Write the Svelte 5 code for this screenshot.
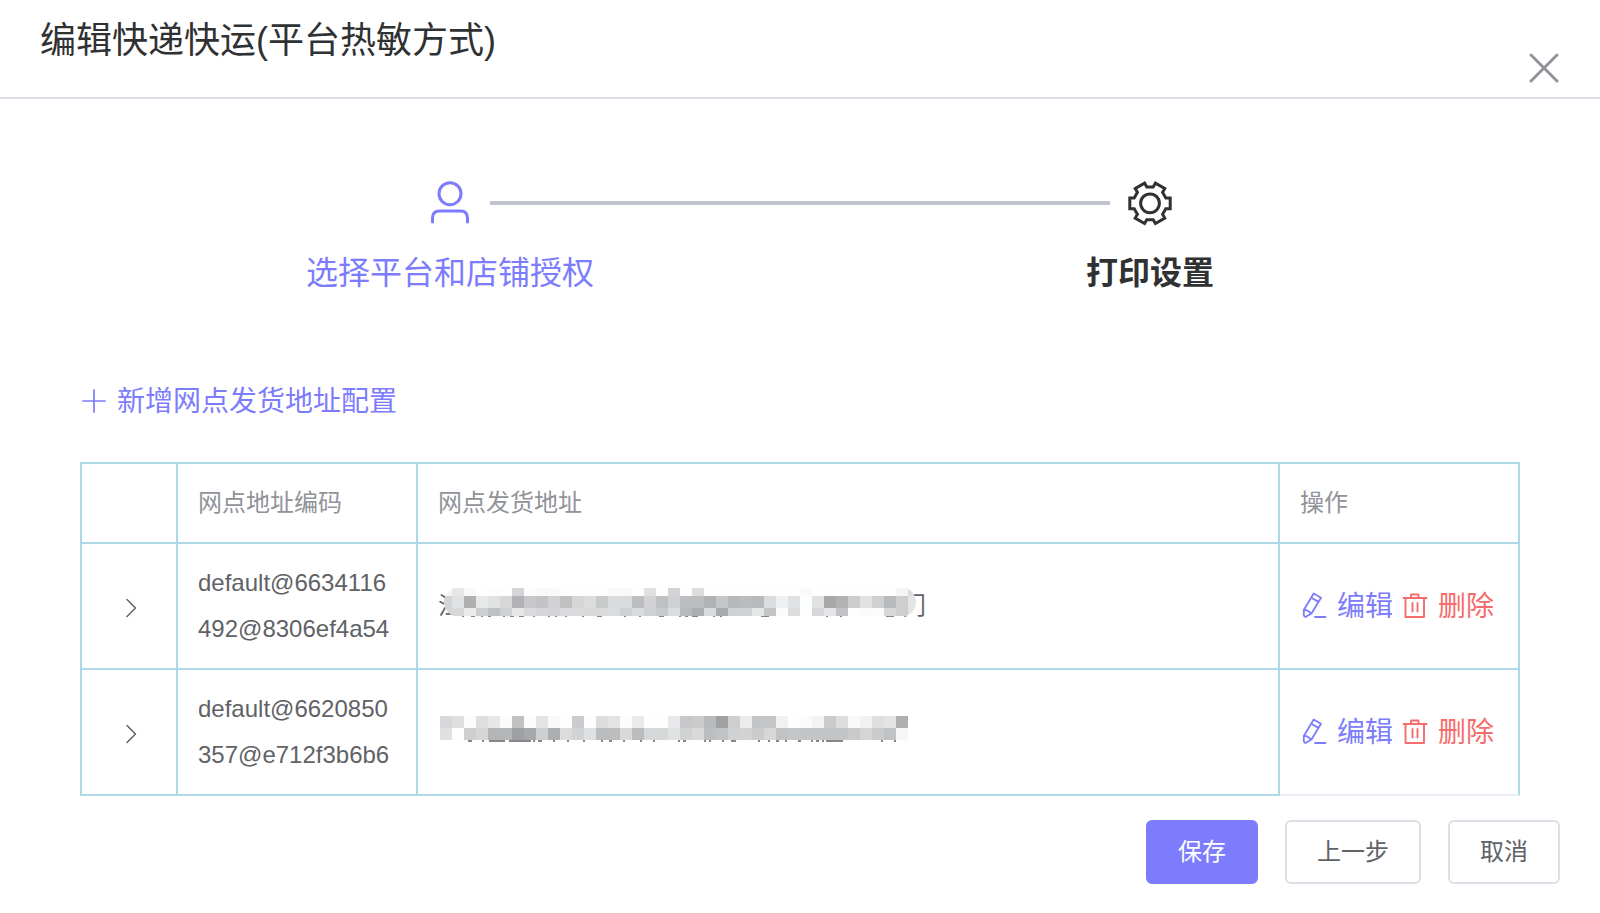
<script>
  const rows = [
    { code: 'default@6634116492@8306ef4a54', mask: 'first' },
    { code: 'default@6620850357@e712f3b6b6', mask: 'second' }
  ];

  // Censored address strips: 12px mosaic cells, one hex colour per cell
  const strips = {
    first: [
      { y: 4, h: 8, cells: 'f5f5f5 e6e6e7 f8f8f8 fefefe fcfcfc fefefe d3d5d8 fdfdfd f9f9f9 fafafa fefefe fefefe fefefe fefefe f9f9f9 f9f9f9 fefefe dfe1e1 fefefe d2d3d6 fefefe dcdede fefefe fefefe fefefe fefefe fefefe fefefe fefefe fefefe fafafa fefefe fefefe fefefe fefefe fefefe fefefe fefefe f4f4f4 dcdddd' },
      { y: 12, h: 12, cells: 'd3d4d7 e0e1e2 b0b0b1 e7e9e9 e0e3e2 d8d8d9 b2b2b4 c8c8ca c3c3c5 d1d2d4 bfc0c2 d6d6d7 dadddc c8c9cb dadbdd d9dadc bdbec0 d3d3d5 bfc0c2 d0d1d3 bcbdbf bdbec0 b1b2b4 c5c6c9 b7b8ba bbbcbe b8b9bb dbdcdf eff1f1 e0e1e4 fcfefd e0e2e1 a8a8a9 b1b2b4 cccdcf e2e2e3 cfd0d2 b9babc cececf e4e4e5' },
      { y: 24, h: 8, cells: 'd5d5d6 d8d8da ebebec cdced0 bfc0c2 cfd0d2 e6e8e8 dad9db d5d6d7 d4d4d6 d9dadc dadadc d9d9d9 dadadb dbdcde cfd0d3 dadbde d0d1d3 c8c9cb dbdcdd b8b9bb acadae dadbdc a9aaac d0d1d3 d1d2d4 e6e8e7 c4c5c7 fbfbfb dddddd fefefe d6d7da e6e6e8 c2c3c5 fefefe fbfbfb fcfcfc d7d7d8 cececf e4e4e5' }
    ],
    second: [
      { y: 6, h: 12, cells: 'd7d8db dfdfdf fcfcfc dddfde e7e7e7 fbfbfb c0c1c3 fcfcfc e4e4e5 f9f9f9 fefefe cbcccf fdfdfd dcdedd e2e4e3 fcfcfc eaeaea fefefe fefefe e9e9e9 c6c7ca cccbcc b9babc a0a1a3 cecece ececec c4c5c7 c5c6c8 f1f1f1 fefefe fbfbfb f3f3f3 cbcbcc dddddd f9f9f9 f1f1f1 dfdfdf e4e4e4 afb0b2' },
      { y: 18, h: 12, cells: 'e0e0e0 fefefe cecfd1 d6d6d6 b4b5b6 b5b6b7 9fa0a3 a7a8aa cecfd1 adaeb0 dcdcdc d2d3d5 dfe0e3 bbbcbe bcbdbf d9d9d9 bbbcbe d7d8da d6d7d9 e0e2e1 d1d2d4 d9d9d9 bdbec0 c1c2c4 d0d1d3 d3d3d4 cacbcd d7d7d7 c1c2c4 c5c6c8 c3c4c6 c4c5c7 c3c4c6 c4c5c7 c9cacc d5d5d5 cacbcd c1c2c4 f6f6f6' }
    ]
  };

  // Stroke ends that show just below each strip: [x, width]
  const ends = {
    first: [[24, 2], [33, 4], [43, 2], [50, 3], [65, 2], [72, 4], [81, 5], [95, 2], [110, 2], [117, 2], [127, 2], [144, 2], [159, 5], [186, 2], [201, 2], [221, 5], [241, 2], [247, 3], [254, 6], [275, 2], [282, 2], [323, 8], [388, 2], [402, 2], [448, 8]],
    second: [[30, 4], [44, 2], [51, 16], [71, 22], [81, 2], [95, 2], [100, 4], [115, 2], [129, 2], [145, 2], [163, 2], [171, 3], [185, 2], [202, 2], [215, 2], [240, 2], [245, 3], [266, 2], [271, 2], [284, 2], [293, 5], [320, 2], [330, 2], [338, 3], [347, 2], [360, 3], [373, 2], [378, 3], [384, 2], [388, 15], [403, 2], [443, 2], [456, 2]]
  };

  // Gear outline: six square teeth, 60 degrees apart, around (24, 24)
  const gear = Array.from({ length: 6 }, (_, k) => (k * Math.PI) / 3)
    .flatMap((a) =>
      [[15.8, -5.4], [20.2, -5.4], [20.2, 5.4], [15.8, 5.4]].map(([x, y]) =>
        [24 + x * Math.cos(a) - y * Math.sin(a), 24.3 + x * Math.sin(a) + y * Math.cos(a)]
          .map((n) => n.toFixed(2))
          .join(',')
      )
    )
    .join(' ');
</script>

<div class="dialog">
  <header>
    <h1>编辑快递快运(平台热敏方式)</h1>
    <button class="close" aria-label="关闭">
      <svg width="32" height="32" viewBox="0 0 32 32"><path d="M3 3 29 29M29 3 3 29" stroke="#909399" stroke-width="3" stroke-linecap="round" /></svg>
    </button>
  </header>

  <main>
    <ol class="steps">
      <li>
        <div class="head">
          <svg width="48" height="48" viewBox="0 0 48 48" fill="none" stroke="currentColor" stroke-width="3" stroke-linecap="round">
            <circle cx="24" cy="14.700" r="11" />
            <path d="M6.500 43V39Q6.500 32 13.500 32H34.500Q41.500 32 41.500 39V43" />
          </svg>
        </div>
        <span>选择平台和店铺授权</span>
      </li>
      <li class="current">
        <div class="head">
          <svg width="48" height="48" viewBox="0 0 48 48" fill="none" stroke="currentColor" stroke-width="3">
            <polygon points={gear} />
            <circle cx="24" cy="24.300" r="9.400" />
          </svg>
        </div>
        <span>打印设置</span>
      </li>
    </ol>

    <button class="link add">
      <svg width="28" height="28" viewBox="0 0 28 28"><path d="M14 3V25M3 14H25" stroke="currentColor" stroke-width="1.700" stroke-linecap="round" /></svg>
      <span>新增网点发货地址配置</span>
    </button>

    <table>
      <colgroup>
        <col class="c-expand" /><col class="c-code" /><col /><col class="c-ops" />
      </colgroup>
      <thead>
        <tr>
          <th></th>
          <th>网点地址编码</th>
          <th>网点发货地址</th>
          <th>操作</th>
        </tr>
      </thead>
      <tbody>
        {#each rows as row}
          <tr>
            <td class="center">
              <button class="expand" aria-label="展开">
                <svg width="24" height="24" viewBox="0 0 24 24" fill="none"><path d="M8 3.500 16.500 12 8 20.500" stroke="#606266" stroke-width="1.500" stroke-linecap="round" stroke-linejoin="round" /></svg>
              </button>
            </td>
            <td>{row.code}</td>
            <td>
              <div class="address">
                {#if row.mask === 'first'}<span>江</span><span>门</span>{/if}
                <svg width="484" height="40" viewBox="0 0 484 40" shape-rendering="crispEdges" aria-hidden="true">
                  <clipPath id="clip-first"><rect x="6" y="3" width="472" height="30" rx="15" /></clipPath>
                  <clipPath id="clip-second"><rect x="0" y="6" width="470" height="24" /></clipPath>
                  {#each ends[row.mask] as [x, w]}
                    <rect {x} y={row.mask === 'first' ? 32 : 30} width={w} height={row.mask === 'first' ? 1 : 2} fill="#85878b" />
                  {/each}
                  <g clip-path={`url(#clip-${row.mask})`}>
                    {#each strips[row.mask] as line}
                      {#each line.cells.split(' ') as fill, i}
                        <rect x={2 + i * 12} y={line.y} width="12" height={line.h} fill={'#' + fill} />
                      {/each}
                    {/each}
                  </g>
                </svg>
              </div>
            </td>
            <td>
              <div class="ops">
                <button class="link">
                  <svg width="28" height="28" viewBox="0 0 28 28" fill="none" stroke="currentColor" stroke-width="1.800" stroke-linecap="round" stroke-linejoin="round">
                    <path d="M13.700 1.500 21 5.700 11.500 21.500 5.500 25 3.800 23.500V18ZM11.300 5.700 18.500 9.900M4.200 18.300C6 17.900 7.500 18.400 8.500 19.300S10.300 20.900 11 21.600M15 25H25.500" />
                  </svg>
                  <span>编辑</span>
                </button>
                <button class="link danger">
                  <svg width="28" height="28" viewBox="0 0 28 28" fill="none" stroke="currentColor" stroke-width="1.900" stroke-linecap="round" stroke-linejoin="round">
                    <path d="M2.500 6H25.500M4.500 6V25H23V6M10 6V2.500H17.500V6M11.500 11V19.500M16.500 11V19.500" />
                  </svg>
                  <span>删除</span>
                </button>
              </div>
            </td>
          </tr>
        {/each}
      </tbody>
    </table>
  </main>

  <footer>
    <button class="btn primary">保存</button>
    <button class="btn">上一步</button>
    <button class="btn">取消</button>
  </footer>
</div>

<style>
  :global(body) {
    margin: 0;
    background: #fff;
  }
  .dialog {
    font-family: 'Liberation Sans', 'Noto Sans CJK SC', sans-serif;
    color: #606266;
    font-size: 24px;
  }
  button {
    font: inherit;
    color: inherit;
    background: none;
    border: 0;
    padding: 0;
    cursor: pointer;
  }
  svg {
    display: block;
    flex: none;
  }
  header {
    display: flex;
    justify-content: space-between;
    align-items: flex-start;
    padding: 16px 40px 13px;
    border-bottom: 2px solid #dcdfe6;
  }
  h1 {
    margin: 0;
    font-size: 36px;
    line-height: 50px;
    font-weight: 400;
    color: #303133;
  }
  .close {
    margin-top: 36px;
  }
  main {
    padding: 76px 80px 24px;
  }
  .steps {
    display: flex;
    list-style: none;
    margin: 0 20px 65px;
    padding: 0;
  }
  .steps li {
    flex: 1;
    text-align: center;
    font-size: 32px;
    line-height: 84px;
    color: #7c7cfc;
  }
  .head {
    display: flex;
    align-items: center;
    justify-content: center;
    height: 56px;
    gap: 16px;
  }
  .steps li:first-child .head::after,
  .steps .current .head::before {
    content: '';
    flex: 1;
    height: 4px;
    background: #c0c4cc;
  }
  .steps li:first-child .head::before,
  .steps .current .head::after {
    content: '';
    flex: 1;
  }
  .steps .current {
    color: #303133;
    font-weight: 700;
  }
  .link {
    display: flex;
    align-items: center;
    gap: 9px;
    font-size: 28px;
    line-height: 40px;
    color: #7c7cfc;
  }
  .link span {
    padding-top: 2px;
  }
  .danger {
    color: #f56c6c;
  }
  .add {
    margin-bottom: 40px;
  }
  table {
    width: 100%;
    table-layout: fixed;
    border-collapse: separate;
    border-spacing: 0;
    border: solid #add8e6;
    border-width: 2px 0 0 2px;
  }
  .c-expand {
    width: 96px;
  }
  .c-code,
  .c-ops {
    width: 240px;
  }
  th,
  td {
    padding: 16px 20px;
    border: solid #add8e6;
    border-width: 0 2px 2px 0;
    text-align: left;
    line-height: 46px;
    word-break: break-all;
  }
  th {
    font-weight: 400;
    color: #909399;
  }
  tbody tr:last-child td:last-child {
    border-bottom-color: #ebeef5;
  }
  td.center {
    padding: 16px 0 16px 4px;
  }
  .expand {
    display: block;
    margin: 4px auto 0;
  }
  .address {
    position: relative;
    display: flex;
    justify-content: space-between;
    max-width: 488px;
    min-height: 46px;
  }
  .address svg {
    position: absolute;
    left: 0;
    top: 1px;
  }
  .ops {
    display: flex;
    gap: 8px;
  }
  footer {
    display: flex;
    justify-content: flex-end;
    gap: 27px;
    padding: 0 40px 29px;
  }
  .btn {
    padding: 0 30px;
    border: 2px solid #dcdfe6;
    border-radius: 6px;
    line-height: 60px;
  }
  .primary {
    background: #7c7cfc;
    border-color: #7c7cfc;
    color: #fff;
  }
</style>
